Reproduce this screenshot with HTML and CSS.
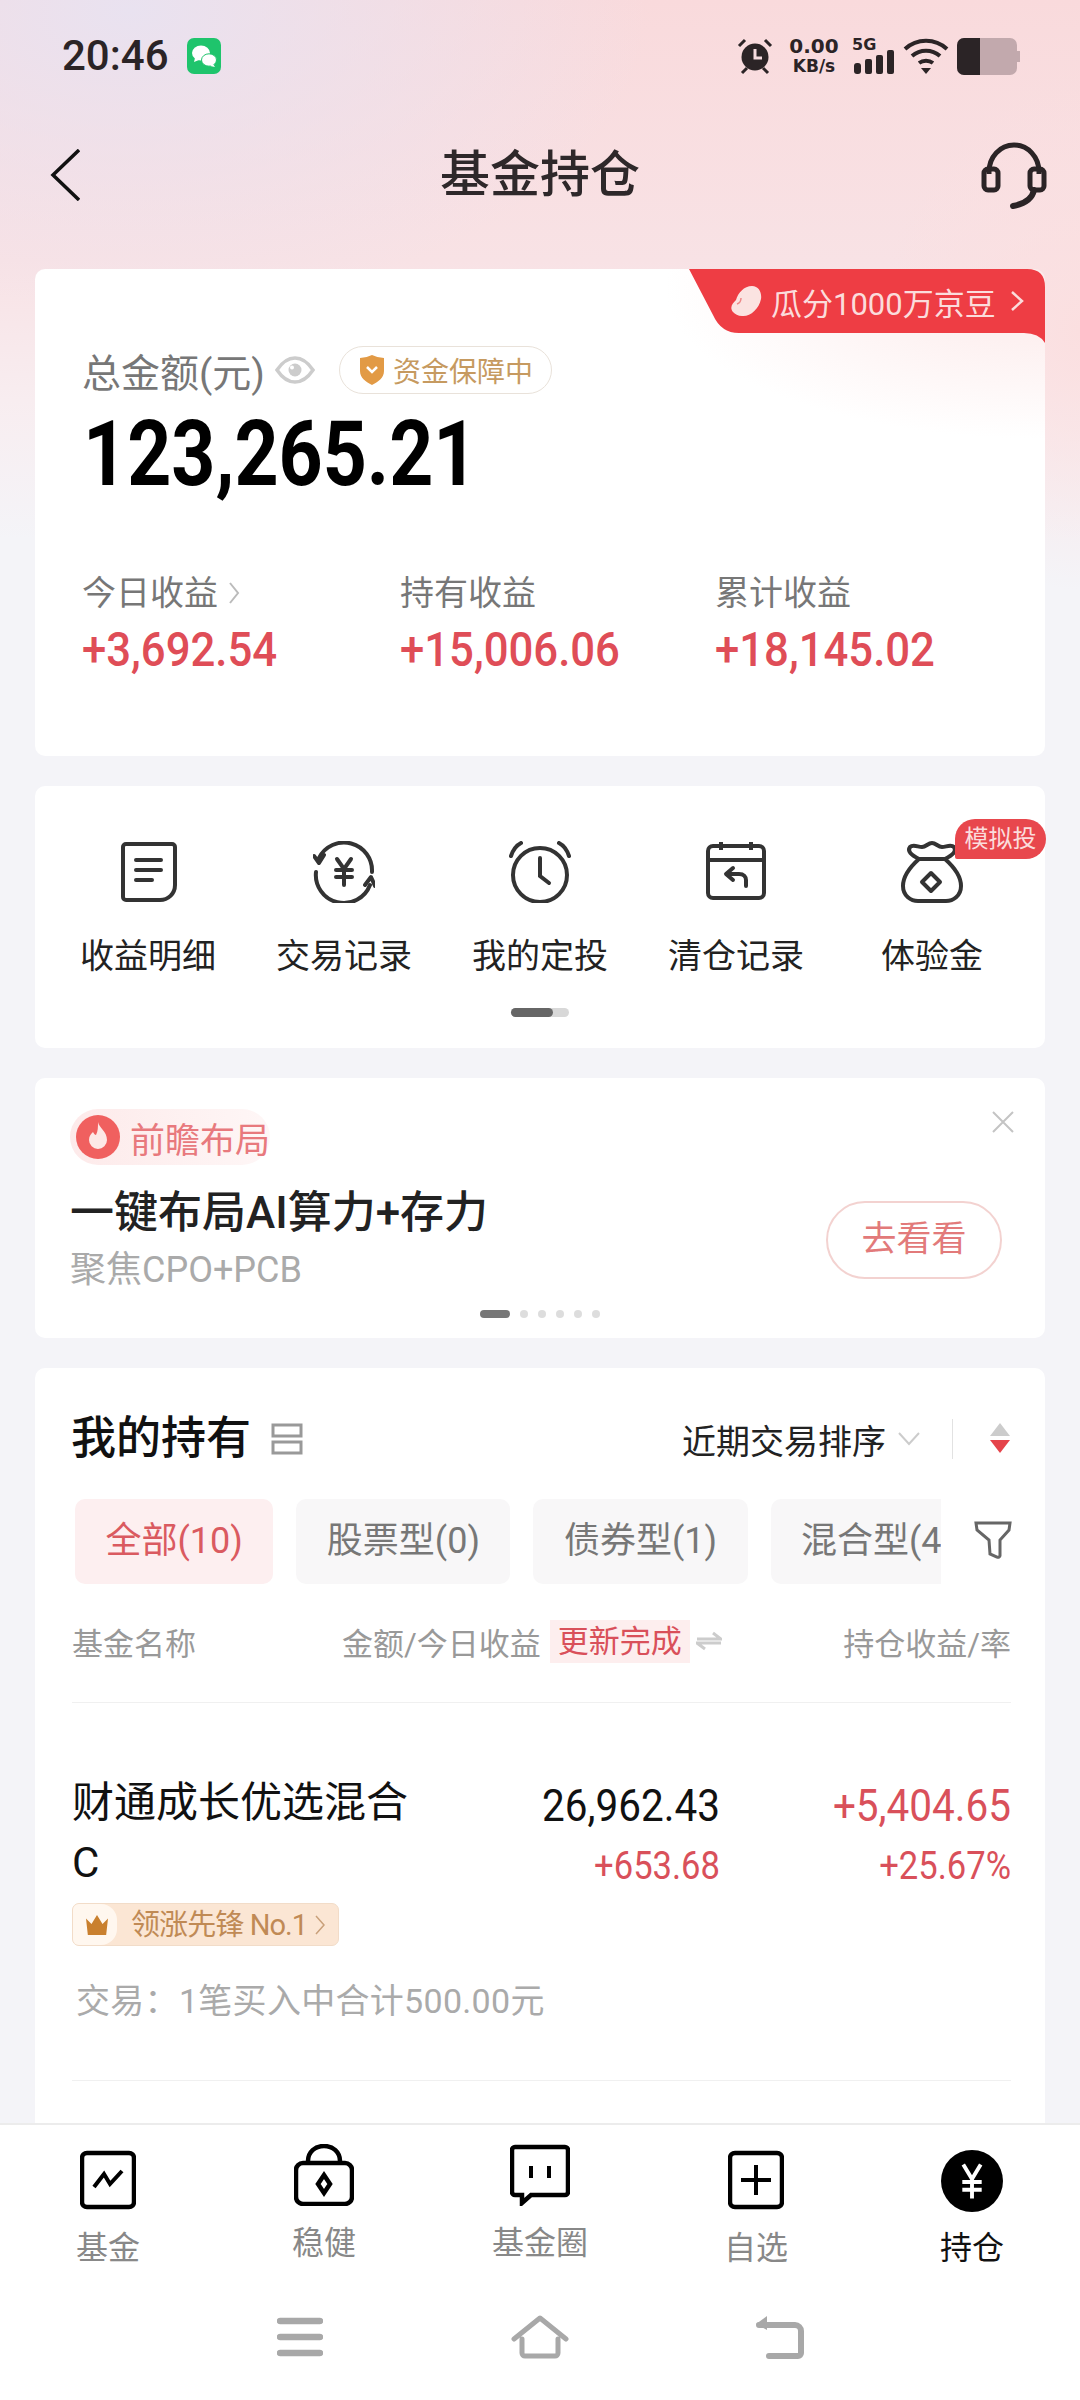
FILE: index.html
```html
<!DOCTYPE html>
<html lang="zh-CN">
<head>
    <meta charset="UTF-8">
    <meta name="viewport" content="width=device-width, initial-scale=1.0">
    <title>基金持仓</title>
    <link rel="stylesheet" href="styles.css">
</head>
<body>
<div class="page">
    <div class="status">
        <div class="status-left">
            <span class="time">20:46</span>
            <svg class="wechat" viewBox="0 0 34 36"><rect width="34" height="36" rx="7" fill="#1fc46c"/><ellipse cx="14" cy="15" rx="9" ry="7.5" fill="#fff"/><path d="M8 20l-1 4 5-2z" fill="#fff"/><ellipse cx="22" cy="22" rx="7.5" ry="6.2" fill="#fff" stroke="#1fc46c"/><path d="M26 26l2 3-5-1z" fill="#fff"/></svg>
        </div>
        <div class="status-right">
            <svg class="st-alarm" viewBox="0 0 36 38"><circle cx="18" cy="20" r="13.5" fill="#2b2426"/><path d="M18 12v9h7" fill="none" stroke="#f6dcdf" stroke-width="3"/><path d="M2 9l6-6M34 9l-6-6M5 36l5-5M31 36l-5-5" stroke="#2b2426" stroke-width="3" fill="none"/></svg>
            <div class="speed"><span>0.00</span><span>KB/s</span></div>
            <div class="signal">
                <span class="st-5g">5G</span>
                <svg class="st-bars" viewBox="0 0 42 25"><rect x="2" y="14" width="7" height="11" rx="3" fill="#2b2426"/><rect x="13" y="10" width="7" height="15" rx="2" fill="#2b2426"/><rect x="24" y="6" width="7" height="19" rx="2" fill="#2b2426"/><rect x="35" y="1" width="7" height="24" rx="2" fill="#2b2426"/></svg>
            </div>
            <svg class="st-wifi" viewBox="0 0 46 36"><path d="M2 11c12-11 30-11 42 0M9 18c8-7 20-7 28 0M16 25c4-3 10-3 14 0" fill="none" stroke="#2b2426" stroke-width="4"/><path d="M18 30h10l-5 6z" fill="#2b2426"/></svg>
            <svg class="st-battery" viewBox="0 0 63 37"><rect width="60" height="37" rx="7" fill="#c2a9ad"/><path d="M60 13h3v11h-3z" fill="#c2a9ad"/><path d="M7 0h16v37H7a7 7 0 0 1-7-7V7a7 7 0 0 1 7-7z" fill="#2b2426"/></svg>
        </div>
    </div>

    <div class="topbar">
        <svg class="back" viewBox="0 0 30 52"><path d="M29 1L3 26l26 25" fill="none" stroke="#111" stroke-width="3.5"/></svg>
        <h1 class="title">基金持仓</h1>
        <svg class="headset" viewBox="0 0 66 67"><path d="M8 32V30C8 15 19 3 33 3s25 12 25 27v2" fill="none" stroke="#2b2426" stroke-width="5"/><rect x="3" y="27" width="14" height="21" rx="4" fill="none" stroke="#2b2426" stroke-width="5"/><rect x="49" y="27" width="14" height="21" rx="4" fill="none" stroke="#2b2426" stroke-width="5"/><path d="M53 48c-2 10-10 14-21 16" fill="none" stroke="#2b2426" stroke-width="6" stroke-linecap="round"/></svg>
    </div>

    <main class="content">
        <section class="card card-total">
            <div class="ribbon">
                <svg class="ribbon-bg" viewBox="0 0 356 76"><path d="M0 0H338Q356 0 356 18V74Q350 64 335 64H50Q32 64 24 46Z" fill="#ee3d44"/></svg>
                <div class="ribbon-text">
                    <svg class="bean" viewBox="0 0 32 32"><path d="M3 27C-1 22 3 18 6 15 8 8 14 1 22 1c7 0 10 7 9 13-2 10-11 18-19 17-4 0-7-2-9-4z" fill="#fbe3e1"/><path d="M11 13c0 3-1 5-4 6" fill="none" stroke="#e88" stroke-width="1.5"/></svg>
                    <span>瓜分1000万京豆</span>
                    <svg class="ribbon-arrow" viewBox="0 0 14 22"><path d="M2 2l10 9-10 9" fill="none" stroke="#fbdcdc" stroke-width="2.5"/></svg>
                </div>
            </div>
            <div class="total-label">
                <span>总金额(元)</span>
                <svg class="eye" viewBox="0 0 40 28"><path d="M2 14C8 5 14 2 20 2s12 3 18 12c-6 9-12 12-18 12S8 23 2 14z" fill="none" stroke="#ccc" stroke-width="3.5"/><circle cx="20" cy="14" r="6.5" fill="#ccc"/><circle cx="17" cy="11.5" r="2" fill="#fff"/></svg>
                <span class="safe-tag">
                    <svg class="shield" viewBox="0 0 26 30"><path d="M1 3Q7 3 13 0q6 3 12 3v13c0 7-6 11-12 14C7 27 1 23 1 16z" fill="#e29a45"/><path d="M8 12l5 5 5-5" fill="none" stroke="#fff" stroke-width="2.5"/></svg>
                    资金保障中
                </span>
            </div>
            <div class="total-amount">123,265.21</div>
            <div class="stats">
                <div>
                    <div class="stat-label">今日收益<svg class="stat-arrow" viewBox="0 0 12 24"><path d="M2 2l8 10-8 10" fill="none" stroke="#bbb" stroke-width="2"/></svg></div>
                    <div class="stat-value">+3,692.54</div>
                </div>
                <div>
                    <div class="stat-label">持有收益</div>
                    <div class="stat-value">+15,006.06</div>
                </div>
                <div>
                    <div class="stat-label">累计收益</div>
                    <div class="stat-value">+18,145.02</div>
                </div>
            </div>
        </section>

        <section class="card card-menu">
            <div class="menu">
                <div class="menu-item">
                    <svg class="menu-icon" viewBox="0 0 62 62"><path d="M9 3H55a3 3 0 0 1 3 3V44c0 9-7 15-15 15H9a3 3 0 0 1-3-3V6a3 3 0 0 1 3-3z" fill="none" stroke="#333" stroke-width="4"/><path d="M19 19H44M19 29H44M19 39H35" stroke="#333" stroke-width="4" stroke-linecap="round" fill="none"/></svg>
                    <span>收益明细</span>
                </div>
                <div class="menu-item">
                    <svg class="menu-icon" viewBox="0 0 62 62"><path d="M6 17A28 28 0 0 1 59 31M3 31A28 28 0 0 0 57 44" fill="none" stroke="#333" stroke-width="4" stroke-linecap="round"/><path d="M1 15l5 7 5-8M52 44l6-8 4 9" fill="none" stroke="#333" stroke-width="4" stroke-linecap="round" stroke-linejoin="round"/><path d="M24 18l7 10 7-10M31 28v16M23 29h16M23 36h16" fill="none" stroke="#333" stroke-width="4" stroke-linecap="round"/></svg>
                    <span>交易记录</span>
                </div>
                <div class="menu-item">
                    <svg class="menu-icon" viewBox="0 0 62 62"><circle cx="31" cy="34" r="27" fill="none" stroke="#333" stroke-width="4"/><path d="M31 17v18l9 7" fill="none" stroke="#333" stroke-width="4" stroke-linecap="round"/><path d="M2 15C4 9 8 4 12 2M60 15C58 9 54 4 50 2" fill="none" stroke="#333" stroke-width="4" stroke-linecap="round"/></svg>
                    <span>我的定投</span>
                </div>
                <div class="menu-item">
                    <svg class="menu-icon" viewBox="0 0 62 62"><rect x="3" y="5" width="56" height="52" rx="5" fill="none" stroke="#333" stroke-width="4"/><path d="M3 19H59M16 1v8M46 1v8" fill="none" stroke="#333" stroke-width="4"/><path d="M28 27l-7 6 7 6M22 33H34c5 0 7 3 7 6v6" fill="none" stroke="#333" stroke-width="4" stroke-linecap="round" stroke-linejoin="round"/></svg>
                    <span>清仓记录</span>
                </div>
                <div class="menu-item">
                    <svg class="menu-icon" viewBox="0 0 62 62"><path d="M18 18C9 26 2 36 2 45c0 10 8 15 15 15H45c7 0 15-5 15-15 0-9-7-19-16-27" fill="none" stroke="#333" stroke-width="4"/><path d="M18 18C10 14 6 10 9 6c3-3 8 0 12 0S27 2 31 2s6 4 10 4 9-3 12 0c3 4-1 8-9 12z" fill="none" stroke="#333" stroke-width="4" stroke-linejoin="round"/><path d="M30 32l9 9-9 9-9-9z" fill="none" stroke="#333" stroke-width="4" stroke-linejoin="round"/></svg>
                    <span>体验金</span>
                    <i class="sim-tag">模拟投</i>
                </div>
            </div>
            <div class="menu-scroll"><i></i></div>
        </section>

        <section class="card card-promo">
            <div class="promo-tag">
                <svg class="flame" viewBox="0 0 44 46"><circle cx="22" cy="23" r="22" fill="#f0605f"/><path d="M22 8c1 6 9 9 9 18a9 9 0 0 1-18 0c0-4 2-6 4-8 1 2 2 3 3 3 2-4 2-8 2-13z" fill="#fde8e6"/></svg>
                <span>前瞻布局</span>
            </div>
            <svg class="promo-close" viewBox="0 0 24 24"><path d="M2 2l20 20M22 2L2 22" stroke="#c4c4c4" stroke-width="2" fill="none"/></svg>
            <div class="promo-body">
                <div>
                    <div class="promo-title">一键布局AI算力+存力</div>
                    <div class="promo-sub">聚焦CPO+PCB</div>
                </div>
                <div class="promo-btn">去看看</div>
            </div>
            <div class="dots"><i class="dot-on"></i><i></i><i></i><i></i><i></i><i></i></div>
        </section>

        <section class="card card-hold">
            <div class="hold-head">
                <h2>我的持有</h2>
                <svg class="layout-icon" viewBox="0 0 34 32"><path d="M3 2h28v11H3zM3 19h28v11H3z" fill="none" stroke="#999" stroke-width="3"/></svg>
                <span class="sort-name">近期交易排序</span>
                <svg class="sort-chev" viewBox="0 0 22 14"><path d="M1 1l10 11L21 1" fill="none" stroke="#ccc" stroke-width="2"/></svg>
                <i class="sort-line"></i>
                <svg class="sort-arrows" viewBox="0 0 22 30"><path d="M11 0l10 13H1z" fill="#ccc"/><path d="M11 30L1 17h20z" fill="#e5434a"/></svg>
            </div>
            <div class="tabs-row">
                <div class="tabs">
                    <span class="tab tab-on">全部(10)</span>
                    <span class="tab">股票型(0)</span>
                    <span class="tab">债券型(1)</span>
                    <span class="tab">混合型(4)</span>
                </div>
                <svg class="filter" viewBox="0 0 38 38"><path d="M2 2h34l-1 7-9 10v15a2 2 0 0 1-3 2l-7-3-1-14L3 9z" fill="none" stroke="#666" stroke-width="3"/></svg>
            </div>
            <div class="th">
                <span class="th-name">基金名称</span>
                <span>金额/今日收益</span>
                <span class="th-tag">更新完成</span>
                <svg class="swap" viewBox="0 0 26 20"><path d="M1 8h24L17 2M25 12H1l8 6" fill="none" stroke="#ccc" stroke-width="3"/></svg>
                <span class="th-last">持仓收益/率</span>
            </div>
            <div class="fund">
                <div class="fund-name">财通成长优选混合C</div>
                <div class="fund-num">
                    <div class="num-big">26,962.43</div>
                    <div class="num-small red">+653.68</div>
                </div>
                <div class="fund-num">
                    <div class="num-big red">+5,404.65</div>
                    <div class="num-small red">+25.67%</div>
                </div>
            </div>
            <div class="rank-tag">
                <span class="rank-crown"><svg viewBox="0 0 26 24"><path d="M1 5l6 6 6-10 6 10 6-6-2 18H3z" fill="#c9802f"/></svg></span>
                <span class="rank-text">领涨先锋 No.1</span>
                <svg class="rank-arrow" viewBox="0 0 10 20"><path d="M1 1l8 9-8 9" fill="none" stroke="#c9a07a" stroke-width="1.5"/></svg>
            </div>
            <div class="trade">交易：1笔买入中合计500.00元</div>
            <div class="row-line"></div>
        </section>
    </main>

    <nav class="tabbar">
        <div class="nav-items">
            <div class="nav-item">
                <svg class="nav-icon" viewBox="0 0 56 60"><rect x="2" y="3" width="52" height="54" rx="5" fill="none" stroke="#000" stroke-width="4.5"/><path d="M14 37L24 24 30 34 42 21" fill="none" stroke="#000" stroke-width="4"/></svg>
                <span>基金</span>
            </div>
            <div class="nav-item nav-up">
                <svg class="nav-icon" viewBox="0 0 60 62"><path d="M14 20v-3C14 8 21 2 30 2s16 6 16 15v3" fill="none" stroke="#000" stroke-width="4.5"/><rect x="2" y="19" width="56" height="41" rx="7" fill="none" stroke="#000" stroke-width="4.5"/><path d="M30 31l6 9-6 9-6-9z" fill="none" stroke="#000" stroke-width="4.5"/></svg>
                <span>稳健</span>
            </div>
            <div class="nav-item nav-up">
                <svg class="nav-icon" viewBox="0 0 60 60"><path d="M5 2h50a3 3 0 0 1 3 3v42a3 3 0 0 1-3 3H21L12 58v-8H5a3 3 0 0 1-3-3V5a3 3 0 0 1 3-3z" fill="none" stroke="#000" stroke-width="4.5"/><path d="M21 21v12M39 21v12" stroke="#000" stroke-width="4" fill="none"/></svg>
                <span>基金圈</span>
            </div>
            <div class="nav-item">
                <svg class="nav-icon" viewBox="0 0 56 60"><rect x="2" y="3" width="52" height="54" rx="5" fill="none" stroke="#000" stroke-width="4.5"/><path d="M28 15v30M13 30h30" stroke="#000" stroke-width="4" fill="none"/></svg>
                <span>自选</span>
            </div>
            <div class="nav-item nav-on">
                <svg class="nav-icon" viewBox="0 0 64 64"><circle cx="32" cy="32" r="32" fill="#000"/><path d="M23 15l9 15 9-15M32 30v20M22 33h20M22 41h20" fill="none" stroke="#fff" stroke-width="4"/></svg>
                <span>持仓</span>
            </div>
        </div>
        <div class="sys-nav">
            <svg class="sys-menu" viewBox="0 0 46 40"><path d="M3 4h40M3 20h40M3 36h40" stroke="#a8a8a8" stroke-width="6.5" stroke-linecap="round" fill="none"/></svg>
            <svg class="sys-home" viewBox="0 0 58 44"><path d="M3 24L29 3l26 21M11 24v14a3 3 0 0 0 3 3h30a3 3 0 0 0 3-3V24" fill="none" stroke="#a8a8a8" stroke-width="5" stroke-linecap="round" stroke-linejoin="round"/></svg>
            <svg class="sys-back" viewBox="0 0 50 44"><path d="M4 10h36a6 6 0 0 1 6 6v22a3 3 0 0 1-3 3H14" fill="none" stroke="#a8a8a8" stroke-width="6" stroke-linecap="round"/><path d="M12 1v14L1 9z" fill="#a8a8a8"/></svg>
        </div>
    </nav>
</div>
</body>
</html>
```

FILE: styles.css
```css
* {
    box-sizing: border-box;
}
body {
    margin: 0;
    font-family: Roboto, "Noto Sans CJK SC", sans-serif;
    color: #222;
}
h1, h2 {
    margin: 0;
    font-weight: 500;
}
svg {
    display: block;
    flex-shrink: 0;
}
.page {
    width: 1080px;
    height: 2400px;
    display: flex;
    flex-direction: column;
    overflow: hidden;
    background:
        radial-gradient(ellipse 520px 300px at 130px 10px, #e9e2f0 0%, rgba(233, 226, 240, 0) 100%),
        radial-gradient(ellipse 200px 260px at 100% 330px, #fbdfe0 0%, rgba(251, 223, 224, 0) 100%),
        linear-gradient(180deg, #f9dadc 0, #f8e2e5 260px, #f8edf0 400px, #f4f4f8 540px);
}

/* status bar */
.status {
    height: 112px;
    padding: 0 60px 0 62px;
    display: flex;
    align-items: center;
    justify-content: space-between;
    color: #2b2426;
}
.status-left {
    display: flex;
    align-items: center;
    gap: 18px;
}
.time {
    font-size: 42px;
    font-weight: 500;
    line-height: 50px;
}
.wechat {
    width: 34px;
    height: 36px;
}
.status-right {
    display: flex;
    align-items: center;
}
.st-alarm {
    width: 36px;
    height: 38px;
}
.speed {
    width: 50px;
    margin-left: 16px;
    display: flex;
    flex-direction: column;
    align-items: center;
    font-size: 20px;
    line-height: 20px;
    font-weight: 700;
    font-family: "DejaVu Sans", sans-serif;
}
.speed span:last-child {
    font-size: 17px;
}
.signal {
    width: 42px;
    height: 36px;
    margin-left: 13px;
}
.st-5g {
    display: block;
    height: 11px;
    font-size: 16px;
    line-height: 14px;
    font-weight: 700;
    font-family: "DejaVu Sans", sans-serif;
}
.st-bars {
    width: 42px;
    height: 25px;
}
.st-wifi {
    width: 46px;
    height: 36px;
    margin-left: 9px;
}
.st-battery {
    width: 63px;
    height: 37px;
    margin-left: 8px;
}

/* title bar */
.topbar {
    height: 157px;
    padding: 0 33px 31px 33px;
    display: grid;
    grid-template-columns: 1fr auto 1fr;
    align-items: center;
}
.back {
    width: 30px;
    height: 52px;
    margin-left: 17px;
}
.title {
    font-size: 50px;
    line-height: 60px;
    color: #2e282a;
    font-weight: 500;
}
.headset {
    width: 66px;
    height: 67px;
    justify-self: end;
}

/* cards */
.content {
    flex: 1;
    min-height: 0;
    overflow: hidden;
    padding: 0 35px;
    display: flex;
    flex-direction: column;
    gap: 30px;
}
.card {
    position: relative;
    flex-shrink: 0;
    background: #fff;
    border-radius: 10px;
}
.card-total {
    height: 487px;
    padding: 76px 0 0 47px;
    background:
        radial-gradient(ellipse 380px 150px at 100% 20px, #fce9e9 0%, rgba(255, 255, 255, 0) 100%),
        #fff;
}
.ribbon {
    position: absolute;
    top: 0;
    right: 0;
    width: 356px;
    height: 76px;
}
.ribbon-bg {
    position: absolute;
    top: 0;
    left: 0;
    width: 356px;
    height: 76px;
}
.ribbon-text {
    position: relative;
    height: 64px;
    padding-left: 41px;
    display: flex;
    align-items: center;
    font-size: 31px;
    color: #fbdcdc;
    white-space: nowrap;
}
.bean {
    width: 32px;
    height: 32px;
    margin-right: 9px;
}
.ribbon-arrow {
    width: 14px;
    height: 22px;
    margin-left: 14px;
}
.total-label {
    height: 50px;
    display: flex;
    align-items: center;
    font-size: 39px;
    color: #777;
}
.eye {
    width: 40px;
    height: 28px;
    margin-left: 10px;
}
.safe-tag {
    height: 48px;
    margin-left: 24px;
    padding: 0 18px 0 19px;
    display: flex;
    align-items: center;
    gap: 8px;
    font-size: 28px;
    color: #c69a60;
    border: 1px solid #e9e2da;
    border-radius: 24px;
}
.shield {
    width: 26px;
    height: 30px;
}
.total-amount {
    margin-top: 15px;
    margin-left: 1px;
    font-size: 90px;
    line-height: 90px;
    font-weight: 700;
    color: #000;
    transform: scaleX(0.855);
    transform-origin: left;
}
.stats {
    margin-top: 71px;
    display: grid;
    grid-template-columns: 318px 315px 1fr;
}
.stat-label {
    display: flex;
    align-items: center;
    font-size: 34px;
    line-height: 44px;
    color: #777;
}
.stat-arrow {
    width: 12px;
    height: 24px;
    margin-left: 10px;
}
.stat-value {
    margin-top: 7px;
    font-size: 48px;
    line-height: 56px;
    font-weight: 500;
    color: #df4d57;
    transform: scaleX(0.91);
    transform-origin: left;
}

/* quick menu */
.card-menu {
    height: 262px;
    padding-top: 55px;
}
.menu {
    padding-left: 15px;
    display: grid;
    grid-template-columns: repeat(5, 196px);
}
.menu-item {
    position: relative;
    display: flex;
    flex-direction: column;
    align-items: center;
    font-size: 34px;
    line-height: 44px;
    color: #222;
}
.menu-icon {
    width: 62px;
    height: 62px;
    margin-bottom: 31px;
}
.sim-tag {
    position: absolute;
    top: -22px;
    right: -16px;
    width: 91px;
    height: 40px;
    font-style: normal;
    font-size: 24px;
    line-height: 40px;
    text-align: center;
    color: #fbdcdc;
    background: #e8474d;
    border-radius: 20px 20px 20px 2px;
}
.menu-scroll {
    width: 58px;
    height: 9px;
    margin: 30px auto 0;
    background: #d8d8d8;
    border-radius: 5px;
}
.menu-scroll i {
    display: block;
    width: 42px;
    height: 9px;
    background: #666;
    border-radius: 5px;
}

/* promo */
.card-promo {
    height: 260px;
    padding: 31px 43px 0 35px;
}
.promo-tag {
    width: 200px;
    height: 56px;
    padding-left: 6px;
    display: flex;
    align-items: center;
    gap: 10px;
    font-size: 35px;
    color: #e8797d;
    background: linear-gradient(90deg, #fdeaea, rgba(253, 234, 234, 0.4));
    border-radius: 28px;
}
.flame {
    width: 44px;
    height: 46px;
}
.promo-close {
    position: absolute;
    top: 32px;
    right: 30px;
    width: 24px;
    height: 24px;
}
.promo-body {
    margin-top: 20px;
    display: flex;
    justify-content: space-between;
    align-items: flex-start;
}
.promo-title {
    font-size: 44px;
    line-height: 56px;
    font-weight: 500;
    color: #222;
}
.promo-sub {
    margin-top: 7px;
    font-size: 36px;
    line-height: 44px;
    color: #aaa;
}
.promo-btn {
    width: 176px;
    height: 78px;
    margin-top: 16px;
    border: 2px solid #f3d2d0;
    border-radius: 39px;
    font-size: 35px;
    line-height: 74px;
    text-align: center;
    color: #e27a7a;
}
.dots {
    position: absolute;
    top: 232px;
    left: 445px;
    display: flex;
    gap: 10px;
}
.dots i {
    width: 8px;
    height: 8px;
    background: #ddd;
    border-radius: 50%;
}
.dots .dot-on {
    width: 30px;
    background: #777;
    border-radius: 4px;
}

/* holdings */
.card-hold {
    height: 900px;
    padding: 46px 34px 0 37px;
}
.hold-head {
    height: 50px;
    display: flex;
    align-items: center;
}
.hold-head h2 {
    font-size: 45px;
    line-height: 50px;
    color: #111;
    margin-left: -1px;
}
.layout-icon {
    width: 34px;
    height: 32px;
    margin-left: 19px;
}
.sort-name {
    margin-left: auto;
    font-size: 34px;
    color: #222;
}
.sort-chev {
    width: 22px;
    height: 14px;
    margin-left: 12px;
}
.sort-line {
    width: 1px;
    height: 40px;
    margin-left: 32px;
    background: #e2e2e2;
}
.sort-arrows {
    width: 22px;
    height: 30px;
    margin-left: 36px;
    margin-top: -2px;
}
.tabs-row {
    height: 85px;
    margin-top: 35px;
    padding-left: 3px;
    display: flex;
    align-items: center;
    justify-content: space-between;
}
.tabs {
    width: 866px;
    height: 85px;
    display: flex;
    gap: 23px;
    overflow: hidden;
}
.tab {
    flex-shrink: 0;
    padding: 0 30.5px;
    font-size: 36px;
    line-height: 85px;
    color: #777;
    background: #f8f7f8;
    border-radius: 10px;
}
.tab-on {
    color: #da5a60;
    background: #fdeff0;
}
.filter {
    width: 38px;
    height: 38px;
    margin-top: -4px;
    margin-right: -1px;
}
.th {
    height: 44px;
    margin-top: 35px;
    display: flex;
    align-items: center;
    font-size: 31px;
    color: #999;
}
.th-name {
    width: 270px;
}
.th-tag {
    height: 43px;
    margin-left: 9px;
    padding: 0 8px;
    line-height: 43px;
    color: #d9505a;
    background: #fdeeee;
}
.swap {
    width: 26px;
    height: 20px;
    margin-left: 6px;
}
.th-last {
    margin-left: auto;
}
.fund {
    margin-top: 39px;
    padding-top: 70px;
    border-top: 1px solid #f0f0f0;
    display: grid;
    grid-template-columns: 350px 298px 291px;
}
.fund-name {
    font-size: 42px;
    line-height: 60px;
    color: #111;
}
.fund-num {
    margin: 3px 0 -3px;
    text-align: right;
}
.num-big {
    font-size: 44px;
    line-height: 60px;
    color: #111;
    transform: scaleX(0.92);
    transform-origin: right;
}
.num-small {
    font-size: 38px;
    line-height: 60px;
    transform: scaleX(0.91);
    transform-origin: right;
}
.red {
    color: #d9505a;
}
.rank-tag {
    width: 267px;
    height: 43px;
    margin-top: 10px;
    display: flex;
    align-items: center;
    background: #fbe6d4;
    border: 1px solid #f2dcc8;
    border-radius: 7px;
    overflow: hidden;
}
.rank-crown {
    width: 44px;
    height: 100%;
    padding-left: 12px;
    display: flex;
    align-items: center;
    background: #fff7ef;
    border-radius: 0 16px 16px 0;
}
.rank-crown svg {
    width: 24px;
    height: 22px;
}
.rank-text {
    margin-left: 14px;
    font-size: 29px;
    letter-spacing: -0.9px;
    line-height: 40px;
    white-space: nowrap;
    color: #c08a55;
}
.rank-arrow {
    width: 10px;
    height: 20px;
    margin-left: 8px;
}
.trade {
    margin-top: 33px;
    padding-left: 4px;
    font-size: 34px;
    letter-spacing: 0.3px;
    line-height: 44px;
    color: #aaa;
}
.row-line {
    height: 1px;
    margin-top: 57px;
    background: #f0f0f0;
}

/* bottom nav */
.tabbar {
    flex-shrink: 0;
    height: 277px;
    position: relative;
    background: #fff;
    border-top: 2px solid #ececec;
}
.nav-items {
    display: grid;
    grid-template-columns: repeat(5, 216px);
    height: 146px;
}
.nav-item {
    padding-top: 25px;
    display: flex;
    flex-direction: column;
    align-items: center;
    font-size: 32px;
    line-height: 40px;
    color: #888;
}
.nav-icon {
    width: 56px;
    height: 60px;
    margin-bottom: 18px;
}
.nav-up {
    padding-top: 19px;
}
.nav-up .nav-icon {
    margin-bottom: 17px;
    width: 60px;
    height: 62px;
}
.nav-on {
    color: #111;
}
.nav-on .nav-icon {
    width: 62px;
    height: 62px;
    margin-bottom: 16px;
}
.sys-nav {
    margin-top: 44px;
    display: grid;
    grid-template-columns: repeat(3, 240px);
    justify-content: center;
    justify-items: center;
}
.sys-menu {
    width: 46px;
    height: 40px;
    margin-top: 2px;
}
.sys-home {
    width: 58px;
    height: 44px;
}
.sys-back {
    width: 50px;
    height: 44px;
}
```
